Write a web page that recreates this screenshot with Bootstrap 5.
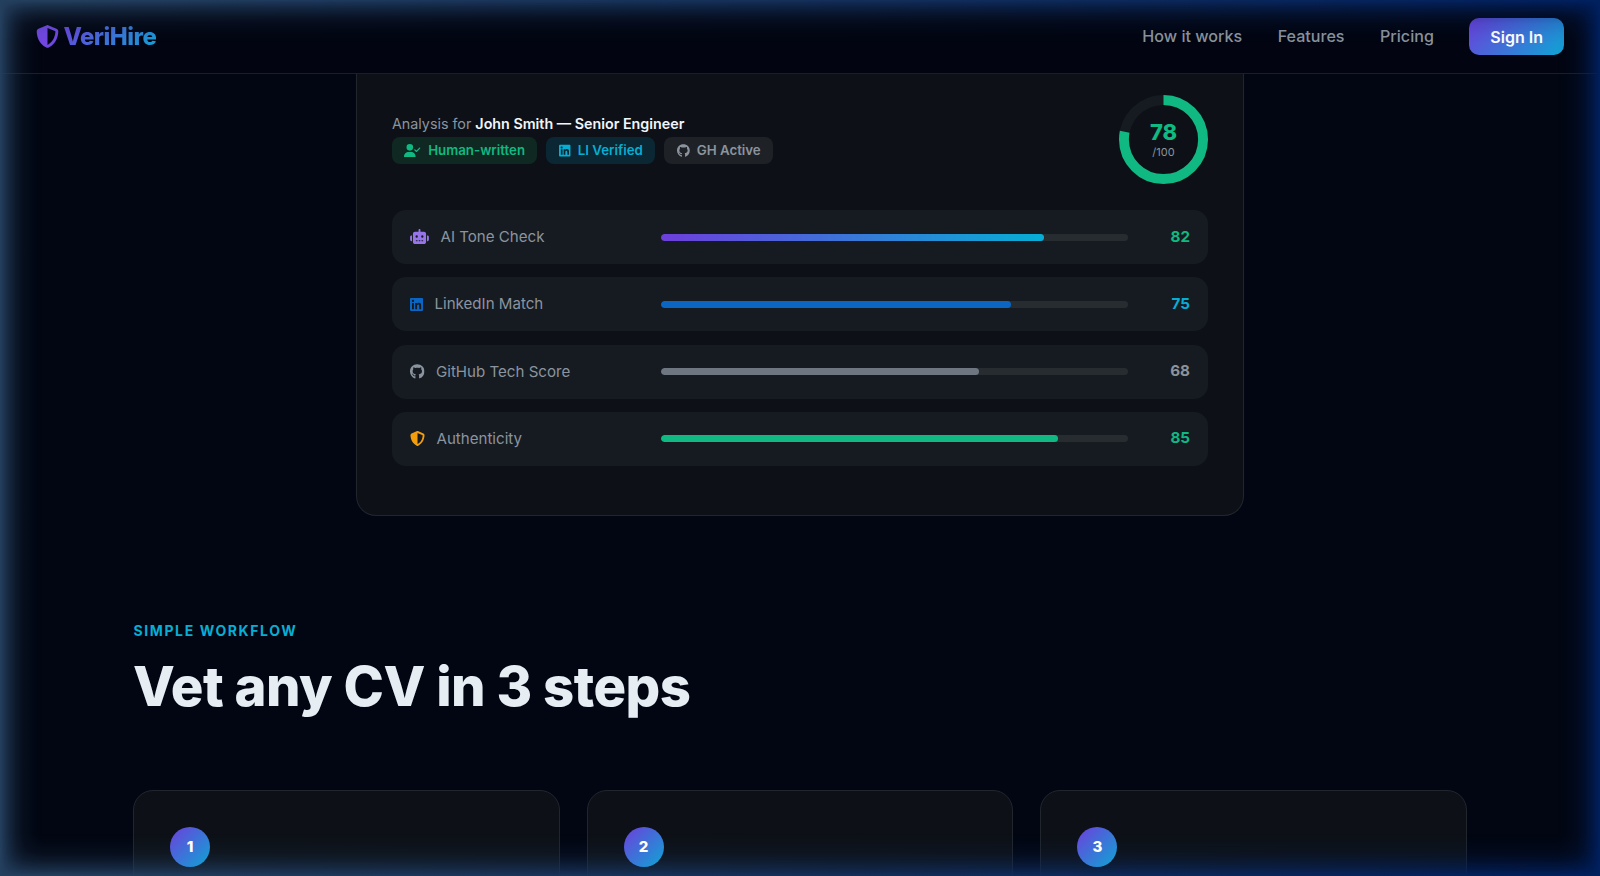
<!DOCTYPE html>
<html lang="en">
<head>
<meta charset="utf-8">
<title>VeriHire</title>
<link rel="stylesheet" href="https://cdn.jsdelivr.net/npm/bootstrap@5.3.0/dist/css/bootstrap.min.css">
<style>
html,body{height:100%;}
body{background:#020612;color:#e6edf3;font-family:Inter,"Liberation Sans",sans-serif;overflow:hidden;}
.vh-nav{height:74px;padding:0 36px 0 35.5px;background:rgba(2,6,18,.9);border-bottom:1px solid #1a1f27;position:relative;z-index:2;}
.vh-logoset{gap:5px;}
.vh-logo{width:23px;height:23px;color:#7047e0;}
.vh-brand{font-size:24px;font-weight:800;letter-spacing:-.5px;background:linear-gradient(135deg,#6d3fdc,#0ea5d4);-webkit-background-clip:text;background-clip:text;color:transparent;text-decoration:none;}
.vh-links{gap:35.5px;}
.vh-navlink{color:#8b949e;font-size:16.1px;font-weight:500;text-decoration:none;}
.vh-signin{background:linear-gradient(135deg,#6d3fdc,#0ea5d4);color:#fff;font-size:16px;font-weight:600;border:0;border-radius:10px;padding:0 21px;height:37px;}
.vh-demo{width:888px;height:442px;margin:0 auto;background:#0d1117;border:1px solid #21262d;border-top:0;border-radius:0 0 20px 20px;padding:21px 35px 0;}
.vh-for{font-size:14.3px;color:#8b949e;line-height:21px;margin-top:18px;}
.vh-for strong{color:#f0f6fc;font-weight:600;}
.vh-pills{gap:9px;margin-top:3px;}
.vh-pill{display:inline-flex;align-items:center;gap:7.2px;height:27px;padding:0 12.4px;border-radius:8px;font-size:13.3px;font-weight:600;}
.vh-pill svg{height:13.3px;flex:none;}
.vh-pill-g{background:#0f2922;color:#10b981;}
.vh-pill-c{background:#0a2733;color:#06aed4;}
.vh-pill-s{background:#1e2227;color:#8b949e;}
.vh-ring{width:89px;height:89px;display:block;}
.vh-ring-wrap{width:89px;height:89px;position:relative;}
.vh-ring-num{position:absolute;inset:0;display:flex;flex-direction:column;align-items:center;justify-content:center;}
.vh-ring-big{font-size:22px;font-weight:800;color:#10b981;line-height:24px;}
.vh-ring-small{font-size:11px;color:#8b949e;line-height:16px;}
.vh-rows{margin-top:26px;display:flex;flex-direction:column;gap:13.3px;}
.vh-row{height:54px;background:#161b22;border-radius:14px;padding:0 18px;}
.vh-label{width:251px;font-size:15.1px;color:#8b949e;gap:11.5px;}
.vh-label span{padding-top:1px;}
.vh-label svg{height:15px;flex:none;}
.vh-track{width:467px;height:7px;border-radius:4px;background:#272c31;overflow:hidden;}
.vh-fill{height:100%;border-radius:4px;}
.vh-fill-ai{background:linear-gradient(90deg,#6d3fdc,#06aed4);}
.vh-fill-li{background:#0a66c2;}
.vh-fill-gh{background:#6e7681;}
.vh-fill-au{background:#10b981;}
.vh-ic-ai{color:#9775e8;}
.vh-ic-li{color:#0a66c2;}
.vh-ic-gh{color:#8b949e;}
.vh-ic-au{color:#f59e0b;}
.vh-val{flex:1;text-align:right;font-size:15.2px;font-weight:700;}
.vh-val-g{color:#10b981;}
.vh-val-c{color:#06aed4;}
.vh-val-s{color:#8b949e;}
.vh-section{padding:0 133px;margin-top:104px;}
.vh-eyebrow{font-size:14px;font-weight:700;letter-spacing:1.6px;color:#06aed4;line-height:21px;padding-left:.5px;}
.vh-h2{font-size:54.4px;font-weight:800;letter-spacing:-.52px;color:#e6edf3;line-height:67px;margin:12px 0 0;}
.vh-steps{display:grid;grid-template-columns:repeat(3,1fr);gap:27px;margin-top:70px;}
.vh-step{height:200px;background:#0d1117;border:1px solid #21262d;border-radius:20px;padding:36px;}
.vh-num{position:relative;z-index:6;width:40px;height:40px;border-radius:50%;background:linear-gradient(135deg,#6d3fdc,#0ea5d4);color:#fff;font-size:15px;font-weight:800;display:flex;align-items:center;justify-content:center;}
.vh-glow{position:fixed;inset:0;z-index:5;pointer-events:none;background:linear-gradient(90deg,#24405f 0%,#14305a 50%,#00205f 100%);
-webkit-mask-image:linear-gradient(to right,#000 0,rgba(0,0,0,.62) 8px,rgba(0,0,0,.32) 16px,rgba(0,0,0,.13) 24px,rgba(0,0,0,.04) 34px,transparent 42px,transparent calc(100% - 42px),rgba(0,0,0,.04) calc(100% - 34px),rgba(0,0,0,.13) calc(100% - 24px),rgba(0,0,0,.32) calc(100% - 16px),rgba(0,0,0,.62) calc(100% - 8px),#000 100%),linear-gradient(to bottom,#000 0,rgba(0,0,0,.62) 8px,rgba(0,0,0,.32) 16px,rgba(0,0,0,.13) 24px,rgba(0,0,0,.04) 34px,transparent 42px,transparent calc(100% - 42px),rgba(0,0,0,.04) calc(100% - 34px),rgba(0,0,0,.13) calc(100% - 24px),rgba(0,0,0,.32) calc(100% - 16px),rgba(0,0,0,.62) calc(100% - 8px),#000 100%);
mask-image:linear-gradient(to right,#000 0,rgba(0,0,0,.62) 8px,rgba(0,0,0,.32) 16px,rgba(0,0,0,.13) 24px,rgba(0,0,0,.04) 34px,transparent 42px,transparent calc(100% - 42px),rgba(0,0,0,.04) calc(100% - 34px),rgba(0,0,0,.13) calc(100% - 24px),rgba(0,0,0,.32) calc(100% - 16px),rgba(0,0,0,.62) calc(100% - 8px),#000 100%),linear-gradient(to bottom,#000 0,rgba(0,0,0,.62) 8px,rgba(0,0,0,.32) 16px,rgba(0,0,0,.13) 24px,rgba(0,0,0,.04) 34px,transparent 42px,transparent calc(100% - 42px),rgba(0,0,0,.04) calc(100% - 34px),rgba(0,0,0,.13) calc(100% - 24px),rgba(0,0,0,.32) calc(100% - 16px),rgba(0,0,0,.62) calc(100% - 8px),#000 100%);}
</style>
</head>
<body>
<svg width="0" height="0" class="position-absolute">
<defs>
<symbol id="i-li" viewBox="0 0 448 512"><path fill="currentColor" d="M416 32H31.900C14.300 32 0 46.500 0 64.300v383.400C0 465.500 14.300 480 31.900 480H416c17.600 0 32-14.500 32-32.300V64.300c0-17.800-14.400-32.300-32-32.300zM135.400 416H69V202.200h66.500V416zm-33.200-243c-21.300 0-38.500-17.300-38.500-38.500S80.900 96 102.200 96c21.200 0 38.500 17.300 38.500 38.500 0 21.300-17.200 38.500-38.500 38.500zm282.100 243h-66.400V312c0-24.800-.5-56.700-34.500-56.700-34.600 0-39.900 27-39.900 54.900V416h-66.400V202.200h63.700v29.200h.9c8.900-16.800 30.600-34.500 62.900-34.500 67.200 0 79.700 44.300 79.700 101.900V416z"/></symbol>
<symbol id="i-gh" viewBox="0 0 496 512"><path fill="currentColor" d="M165.900 397.400c0 2-2.300 3.600-5.200 3.600-3.300 .3-5.600-1.300-5.600-3.600 0-2 2.300-3.600 5.200-3.600 3-.3 5.600 1.300 5.600 3.600zm-31.100-4.500c-.7 2 1.300 4.300 4.300 4.900 2.600 1 5.600 0 6.200-2s-1.300-4.300-4.300-5c-2.600-.7-5.500 .3-6.200 2.100zm44.200-1.700c-2.900 .7-4.900 2.600-4.600 4.900 .3 2 2.900 3.300 5.900 2.600 2.900-.7 4.900-2.600 4.600-4.600-.3-1.900-3-3.200-5.900-2.900zM244.800 8C106.100 8 0 113.300 0 252c0 110.900 69.800 205.800 169.500 239.200 12.800 2.300 17.300-5.600 17.300-12.100 0-6.200-.3-40.400-.3-61.400 0 0-70 15-84.700-29.800 0 0-11.400-29.100-27.800-36.600 0 0-22.900-15.700 1.600-15.400 0 0 24.900 2 38.600 25.800 21.900 38.600 58.600 27.500 72.900 20.900 2.300-16 8.800-27.100 16-33.700-55.900-6.200-112.300-14.300-112.300-110.500 0-27.500 7.600-41.300 23.600-58.900-2.600-6.500-11.100-33.300 2.600-67.900 20.900-6.500 69 27 69 27 20-5.600 41.500-8.500 62.800-8.500s42.800 2.900 62.800 8.500c0 0 48.100-33.600 69-27 13.700 34.700 5.200 61.400 2.600 67.900 16 17.700 25.800 31.500 25.800 58.900 0 96.500-58.900 104.200-114.800 110.500 9.200 7.900 17 22.900 17 46.400 0 33.700-.3 75.400-.3 83.600 0 6.500 4.600 14.400 17.300 12.100C428.200 457.800 496 362.900 496 252 496 113.300 383.500 8 244.800 8z"/></symbol>
<symbol id="i-shield" viewBox="0 0 512 512"><path fill="currentColor" d="M256 0c4.600 0 9.200 1 13.400 2.900L457.700 82.800c22 9.300 38.400 31 38.300 57.200c-.5 99.200-41.300 280.700-213.600 363.200c-16.700 8-36.100 8-52.800 0C57.300 420.700 16.500 239.200 16 140c-.1-26.200 16.300-47.900 38.300-57.200L242.700 2.900C246.800 1 251.400 0 256 0zm0 66.800V444.800C394 378 431.100 230.100 432 141.400L256 66.800l0 0z"/></symbol>
<symbol id="i-robot" viewBox="0 0 640 512"><path fill="currentColor" d="M320 0c17.700 0 32 14.300 32 32V96H472c39.800 0 72 32.200 72 72V440c0 39.800-32.200 72-72 72H168c-39.800 0-72-32.200-72-72V168c0-39.800 32.200-72 72-72H288V32c0-17.700 14.300-32 32-32zM208 384c-8.800 0-16 7.200-16 16s7.200 16 16 16h32c8.800 0 16-7.200 16-16s-7.200-16-16-16H208zm96 0c-8.800 0-16 7.200-16 16s7.200 16 16 16h32c8.800 0 16-7.200 16-16s-7.200-16-16-16H304zm96 0c-8.800 0-16 7.200-16 16s7.200 16 16 16h32c8.800 0 16-7.200 16-16s-7.200-16-16-16H400zM264 256a40 40 0 1 0 -80 0 40 40 0 1 0 80 0zm152 40a40 40 0 1 0 0-80 40 40 0 1 0 0 80zM48 224H64V416H48c-26.500 0-48-21.500-48-48V272c0-26.500 21.500-48 48-48zm544 0c26.500 0 48 21.500 48 48v96c0 26.500-21.500 48-48 48H576V224h16z"/></symbol>
<symbol id="i-user" viewBox="0 0 640 512"><path fill="currentColor" d="M96 128a128 128 0 1 1 256 0A128 128 0 1 1 96 128zM0 482.300C0 383.800 79.800 304 178.300 304h91.400C368.200 304 448 383.800 448 482.300c0 16.400-13.300 29.700-29.700 29.700H29.700C13.300 512 0 498.700 0 482.300zM625 177L497 305c-9.400 9.400-24.600 9.400-33.900 0l-64-64c-9.400-9.400-9.400-24.600 0-33.900s24.600-9.400 33.900 0l47 47L591 143c9.400-9.400 24.600-9.400 33.900 0s9.400 24.600 0 33.900z"/></symbol>
</defs>
</svg>
<nav class="vh-nav d-flex align-items-center justify-content-between">
  <a href="#" class="d-flex align-items-center text-decoration-none vh-logoset">
    <svg class="vh-logo"><use href="#i-shield"/></svg>
    <span class="vh-brand">VeriHire</span>
  </a>
  <div class="d-flex align-items-center vh-links">
    <a href="#" class="vh-navlink">How it works</a>
    <a href="#" class="vh-navlink">Features</a>
    <a href="#" class="vh-navlink">Pricing</a>
    <button class="vh-signin">Sign In</button>
  </div>
</nav>
<main>
  <div class="vh-demo">
    <div class="d-flex justify-content-between align-items-start">
      <div>
        <div class="vh-for">Analysis for <strong>John Smith — Senior Engineer</strong></div>
        <div class="d-flex vh-pills">
          <span class="vh-pill vh-pill-g"><svg width="16.6" height="13.3"><use href="#i-user"/></svg>Human-written</span>
          <span class="vh-pill vh-pill-c"><svg width="11.7" height="13.3"><use href="#i-li"/></svg>LI Verified</span>
          <span class="vh-pill vh-pill-s"><svg width="12.9" height="13.3"><use href="#i-gh"/></svg>GH Active</span>
        </div>
      </div>
      <div class="vh-ring-wrap">
        <svg class="vh-ring" viewBox="0 0 90 90"><circle cx="45" cy="45" r="40" fill="none" stroke="#161b22" stroke-width="10"/><circle cx="45" cy="45" r="40" fill="none" stroke="#10b981" stroke-width="10" stroke-dasharray="196 251.300" transform="rotate(-90 45 45)"/></svg>
        <div class="vh-ring-num"><span class="vh-ring-big">78</span><span class="vh-ring-small">/100</span></div>
      </div>
    </div>
    <div class="vh-rows">
      <div class="vh-row d-flex align-items-center">
        <div class="vh-label d-flex align-items-center"><svg width="19" height="15" class="vh-ic-ai"><use href="#i-robot"/></svg><span>AI Tone Check</span></div>
        <div class="vh-track"><div class="vh-fill vh-fill-ai" style="width:82%"></div></div>
        <div class="vh-val vh-val-g">82</div>
      </div>
      <div class="vh-row d-flex align-items-center">
        <div class="vh-label d-flex align-items-center"><svg width="13" height="15" class="vh-ic-li"><use href="#i-li"/></svg><span>LinkedIn Match</span></div>
        <div class="vh-track"><div class="vh-fill vh-fill-li" style="width:75%"></div></div>
        <div class="vh-val vh-val-c">75</div>
      </div>
      <div class="vh-row d-flex align-items-center">
        <div class="vh-label d-flex align-items-center"><svg width="14.5" height="15" class="vh-ic-gh"><use href="#i-gh"/></svg><span>GitHub Tech Score</span></div>
        <div class="vh-track"><div class="vh-fill vh-fill-gh" style="width:68%"></div></div>
        <div class="vh-val vh-val-s">68</div>
      </div>
      <div class="vh-row d-flex align-items-center">
        <div class="vh-label d-flex align-items-center"><svg width="15" height="15" class="vh-ic-au"><use href="#i-shield"/></svg><span>Authenticity</span></div>
        <div class="vh-track"><div class="vh-fill vh-fill-au" style="width:85%"></div></div>
        <div class="vh-val vh-val-g">85</div>
      </div>
    </div>
  </div>
  <section class="vh-section">
    <div class="vh-eyebrow">SIMPLE WORKFLOW</div>
    <h2 class="vh-h2">Vet any CV in 3 steps</h2>
    <div class="vh-steps">
      <div class="vh-step"><div class="vh-num">1</div></div>
      <div class="vh-step"><div class="vh-num">2</div></div>
      <div class="vh-step"><div class="vh-num">3</div></div>
    </div>
  </section>
</main>
<div class="vh-glow"></div>
<script src="https://cdn.jsdelivr.net/npm/bootstrap@5.3.0/dist/js/bootstrap.bundle.min.js"></script>
</body>
</html>
